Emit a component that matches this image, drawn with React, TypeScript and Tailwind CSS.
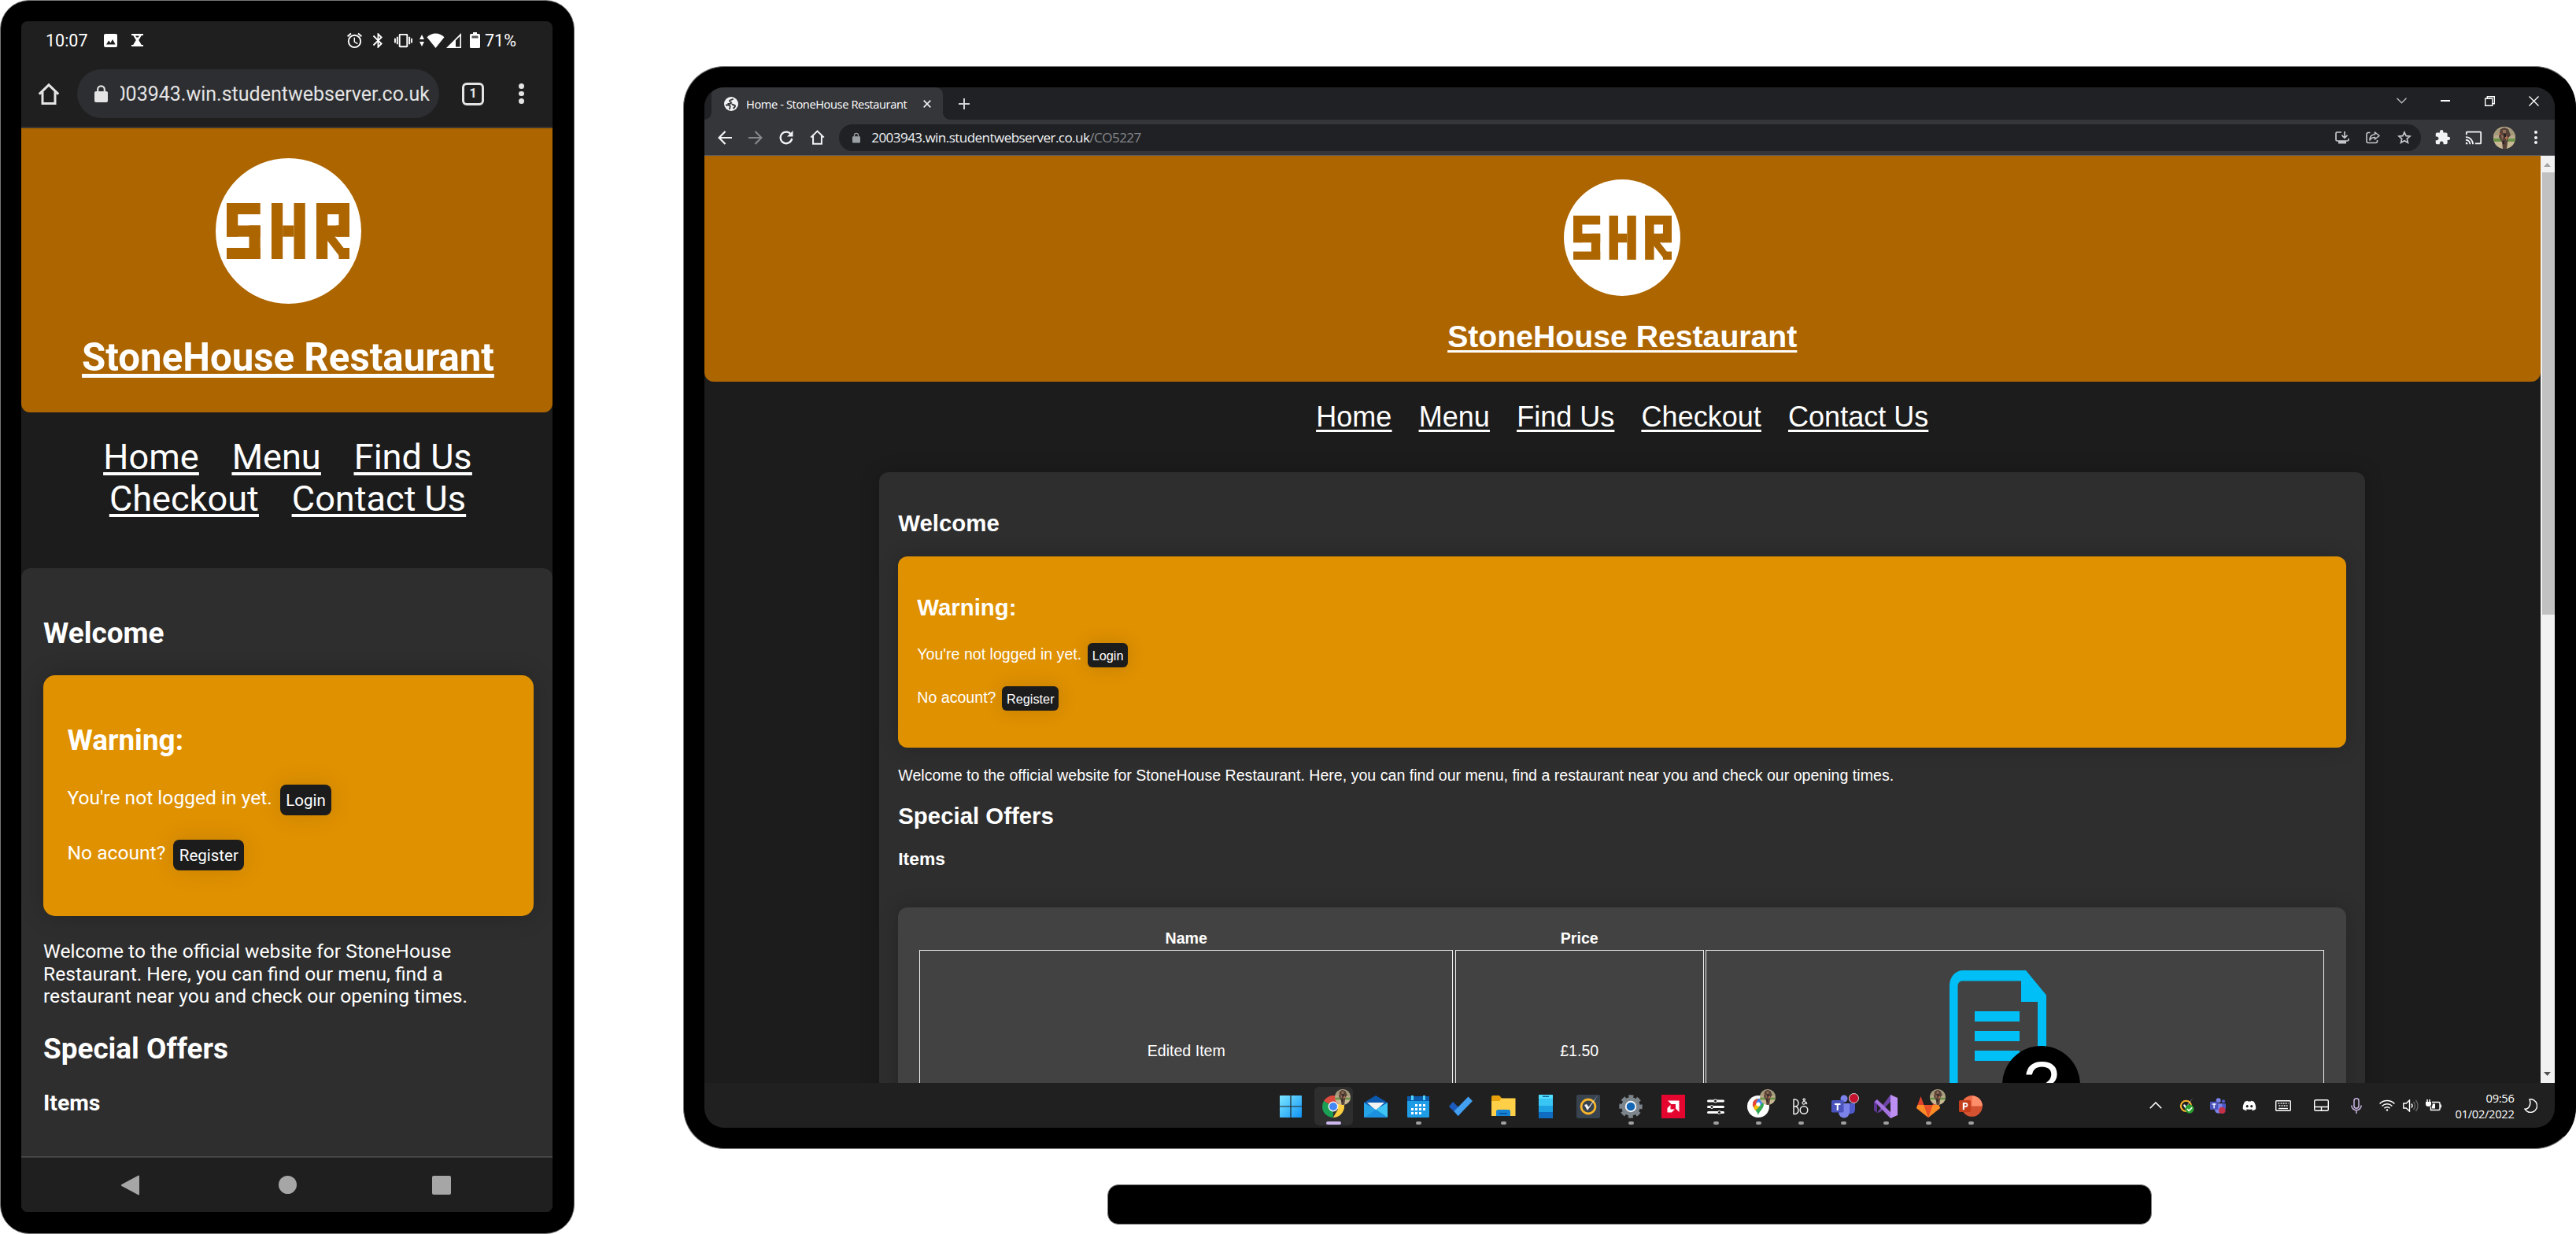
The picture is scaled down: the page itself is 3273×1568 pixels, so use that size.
import React from 'react';
import { FaDiscord } from 'react-icons/fa';
import { MdExtension, MdBluetooth, MdOutlineAlarm, MdVibration, MdCast } from 'react-icons/md';

type Kids = { children?: React.ReactNode };

/* ---------- Shared pieces ---------- */

function Logo({ className }: { className: string }) {
  return (
    <div className={`flex items-center justify-center rounded-full bg-white ${className}`}>
      <svg viewBox="0 0 11 5" className="w-[84.7%]" fill="#ad6500" stroke="#ad6500" strokeWidth="0">
        <rect x="0" y="0" width="3" height="1" />
        <rect x="0" y="0" width="1" height="3" />
        <rect x="0" y="2" width="3" height="1" />
        <rect x="2" y="2" width="1" height="3" />
        <rect x="0" y="4" width="3" height="1" />
        <rect x="4" y="0" width="1" height="5" />
        <rect x="6" y="0" width="1" height="5" />
        <rect x="5" y="2" width="1" height="1" />
        <rect x="8" y="0" width="1" height="5" />
        <rect x="8" y="0" width="3" height="1" />
        <rect x="10" y="0" width="1" height="3" />
        <rect x="9.8" y="2" width="1.2" height="1" />
        <rect x="10" y="4" width="1" height="1" />
        <line x1="9.1" y1="2.9" x2="10.5" y2="4.7" strokeWidth="0.75" />
        <rect x="8.9" y="2" width="1.2" height="1" />
      </svg>
    </div>
  );
}

function Avatar({ className }: { className: string }) {
  return (
    <svg viewBox="0 0 28 28" className={className}>
      <defs>
        <clipPath id="avatar-clip"><circle cx="14" cy="14" r="14" /></clipPath>
      </defs>
      <g clipPath="url(#avatar-clip)">
        <rect width="28" height="28" fill="#b9a98a" />
        <rect y="3" width="28" height="8" fill="#a39a7c" />
        <rect y="15" width="28" height="4" fill="#6c9448" />
        <rect y="19" width="28" height="9" fill="#c8b994" />
        <path d="M9 3l5-2 5 2 3 8-3 3-1 6-1 8h-5l-1-8-4-7 1-6z" fill="#564238" />
        <path d="M12 4h4v4h-4zM10 10l3 2-2 5zM16 11l3 3-3 4z" fill="#94705a" />
        <path d="M13 9h3v5h-2zM12 18h2v4h-2z" fill="#2a2222" />
        <path d="M15 13h3v2h-3zM7 8h2v2H7z" fill="#c86a48" />
      </g>
    </svg>
  );
}

function HomeIcon({ className }: { className: string }) {
  return (
    <svg viewBox="0 0 28 28" className={className} fill="none" stroke="currentColor" strokeWidth="3">
      <path d="M1.8 14.2L14 2.4l12.2 11.8M6 11v15h16V11" />
    </svg>
  );
}

function LockIcon({ className }: { className: string }) {
  return (
    <svg viewBox="0 0 17 22" className={className}>
      <rect x="0" y="8" width="17" height="14" rx="2" fill="currentColor" />
      <path d="M4.2 9V5.600a4.300 4.300 0 018.600 0V9" fill="none" stroke="currentColor" strokeWidth="2.200" />
    </svg>
  );
}

/* ---------- Phone ---------- */

function PhoneStatus() {
  return (
    <div className="flex h-[48px] shrink-0 items-center text-[21.5px] leading-[24px] text-white">
      <span className="ml-[31px] w-[74px] pt-[2px]">10:07</span>
      <svg viewBox="0 0 17 17" className="h-[17px] w-[17px]">
        <rect width="17" height="17" rx="2" fill="#fff" />
        <path d="M3 13.500l3.200-5 2.200 3 2.600-4.500 3.600 6.500z" fill="#1f1f1f" />
      </svg>
      <svg viewBox="0 0 15 16" className="ml-[18px] h-[16px] w-[15px]" fill="#fff">
        <path fillRule="evenodd" d="M0 0h15v2h-2.200L9.200 8l3.600 6H15v2H0v-2h2.200l3.600-6L2.200 2H0zM5 2.500l1.300 2h2.400l1.300-2z" />
      </svg>
      <MdOutlineAlarm className="ml-[257px] h-[23px] w-[23px]" />
      <MdBluetooth className="ml-[7px] h-[23px] w-[23px]" />
      <MdVibration className="ml-[9px] h-[23px] w-[23px]" />
      <svg viewBox="0 0 6 15" className="ml-[9px] h-[17px] w-[6px]" fill="#fff">
        <path d="M3 0l3 6H0zM3 15L0 9h6z" />
      </svg>
      <svg viewBox="0 0 22 19" className="ml-[3px] h-[19px] w-[23px]" fill="#fff">
        <path d="M11 19L0 5.200C3 2 7 .4 11 .4S19 2 22 5.200z" />
      </svg>
      <svg viewBox="0 0 19 19" className="ml-[2px] h-[19px] w-[19px]" fill="#fff">
        <path fillRule="evenodd" d="M19 0v19H0zM17.400 4L12 9.400v8h5.400z" />
      </svg>
      <svg viewBox="0 0 13 20" className="ml-[11px] h-[20px] w-[13px]">
        <rect x="4" y="0" width="5" height="3" fill="#fff" />
        <rect x="0" y="2" width="13" height="18" rx="1.500" fill="#fff" />
        <rect x="2.500" y="4.500" width="8" height="3" fill="#555" />
      </svg>
      <span className="ml-[6px] pt-[2px]">71%</span>
    </div>
  );
}

function PhoneToolbar() {
  return (
    <div className="flex h-[88px] shrink-0 items-center border-b-2 border-[#3b3630] pt-[2px] text-[#e4e4e4]">
      <HomeIcon className="ml-[21px] h-[29px] w-[28px]" />
      <div className="ml-[22px] flex h-[62px] w-[460px] items-center rounded-full bg-[#2d2e31] pl-[22px]">
        <LockIcon className="h-[22px] w-[17px]" />
        <div className="ml-[16px] flex w-[393px] justify-end overflow-hidden pt-[2px]">
          <span className="text-[25px] leading-[32px] whitespace-nowrap">2003943.win.studentwebserver.co.uk</span>
        </div>
      </div>
      <div className="ml-[29px] flex h-[29px] w-[28px] items-center justify-center rounded-[6px] border-[3px] border-[#e4e4e4] text-[16px] leading-none font-bold">
        1
      </div>
      <div className="ml-[44px] flex flex-col gap-[3px]">
        <i className="size-[6.5px] rounded-full bg-[#e4e4e4]" />
        <i className="size-[6.5px] rounded-full bg-[#e4e4e4]" />
        <i className="size-[6.5px] rounded-full bg-[#e4e4e4]" />
      </div>
    </div>
  );
}

function PhoneButton({ children }: Kids) {
  return (
    <span className="flex h-[39.5px] items-center rounded-[8px] bg-[#1c1c1c] px-[7.5px] text-[20.5px] leading-[24px] shadow-[0_0_30px_rgba(0,0,0,0.12)]">
      {children}
    </span>
  );
}

function Phone() {
  return (
    <div className="h-[1568px] w-[730px] shrink-0 rounded-[37px] border border-[#777] bg-black p-[26px] pr-[27px]">
      <div className="flex h-[1513px] w-[675px] flex-col overflow-hidden rounded-[8px] bg-[#1f1f1f] font-[Roboto,sans-serif] text-white">
        <PhoneStatus />
        <PhoneToolbar />
        <div className="flex min-h-0 flex-1 flex-col bg-[#1c1c1c]">
          <header className="flex h-[361px] shrink-0 flex-col items-center rounded-b-[11px] bg-[#ad6500] pt-[38px] pl-[3px]">
            <Logo className="size-[185px]" />
            <h1 className="mt-[40px] text-[49.2px] leading-[56px] font-bold whitespace-nowrap underline decoration-[4.5px] underline-offset-[4px]">
              StoneHouse Restaurant
            </h1>
          </header>
          <nav className="mt-[30px] flex flex-col items-center pl-[2px] text-[45.1px] leading-[53px] whitespace-nowrap">
            <div className="flex gap-[42px] underline decoration-[3.5px] underline-offset-[4px]">
              <a>Home</a><a>Menu</a><a>Find Us</a>
            </div>
            <div className="flex gap-[42px] underline decoration-[3.5px] underline-offset-[4px]">
              <a>Checkout</a><a>Contact Us</a>
            </div>
          </nav>
          <main className="mt-[62px] flex-1 rounded-t-[12px] bg-[#2e2e2e] pt-[62px] pr-[24.5px] pl-[28px]">
            <h2 className="text-[36.9px] leading-[42px] font-bold">Welcome</h2>
            <section className="mt-[32px] h-[306px] rounded-[15px] bg-[#e09100] pt-[62px] pl-[30.5px] shadow-[0_0_30px_rgba(0,0,0,0.2)]">
              <h2 className="text-[36.9px] leading-[42px] font-bold">Warning:</h2>
              <div className="mt-[35px] flex h-[39px] items-center text-[24.6px] leading-[28px]">
                <span className="mr-[10px] pb-[6px]">You're not logged in yet.</span>
                <PhoneButton>Login</PhoneButton>
              </div>
              <div className="mt-[31px] flex h-[39px] items-center text-[24.6px] leading-[28px]">
                <span className="mr-[10px] pb-[6px]">No acount?</span>
                <PhoneButton>Register</PhoneButton>
              </div>
            </section>
            <p className="mt-[31px] text-[24.6px] leading-[28.5px] whitespace-nowrap">
              Welcome to the official website for StoneHouse<br />
              Restaurant. Here, you can find our menu, find a<br />
              restaurant near you and check our opening times.
            </p>
            <h2 className="mt-[31px] text-[36.9px] leading-[42px] font-bold">Special Offers</h2>
            <h3 className="mt-[31px] text-[28.4px] leading-[34px] font-bold">Items</h3>
          </main>
        </div>
        <div className="flex h-[71px] shrink-0 items-center border-t-2 border-[#454545] bg-[#1f1f1f]">
          <svg viewBox="0 0 23 26" className="ml-[127px] h-[26px] w-[23px]" fill="#a6a6a6">
            <path d="M22 .5a1 1 0 011 1v23a1 1 0 01-1 1L.6 14a1.200 1.200 0 010-2z" />
          </svg>
          <i className="ml-[177px] size-[22.5px] rounded-full bg-[#a6a6a6]" />
          <i className="ml-[172.5px] size-[24px] rounded-[2px] bg-[#a6a6a6]" />
        </div>
      </div>
    </div>
  );
}

/* ---------- Laptop: browser chrome ---------- */

function TabStrip() {
  return (
    <div className="flex h-[41px] shrink-0 bg-[#202124] text-white">
      <svg viewBox="0 0 9 9" className="h-[9px] w-[9px] self-end" fill="#35363a"><path d="M9 0v9H0a9 9 0 009-9z" /></svg>
      <div className="flex h-[41px] w-[294px] items-center rounded-t-[9px] bg-[#35363a] pl-[16px]">
        <svg viewBox="0 0 18 18" className="size-[18px]">
          <circle cx="9" cy="9" r="9" fill="#f1f3f4" />
          <path d="M11.500 2.500c-1 1.800-4 1-4.500 2.500s3 1.500 2 3-3.500.8-4.500 1M2 10.500h3.500c2 0 2.500 1.500 2 3s-.5 1.500-.5 2.500M10 9c1 2 4.500 1 4 3s-2 2-2.500 3" fill="none" stroke="#35363a" strokeWidth="1.900" />
        </svg>
        <span className="ml-[10px] w-[225px] text-[14.7px] leading-[20px] tracking-[-0.42px] whitespace-nowrap">
          Home - StoneHouse Restaurant
        </span>
        <svg viewBox="0 0 10 10" className="size-[10px]" stroke="#e8eaed" strokeWidth="1.800"><path d="M.7.7l8.600 8.600M9.300.7L.7 9.300" /></svg>
      </div>
      <svg viewBox="0 0 9 9" className="h-[9px] w-[9px] self-end" fill="#35363a"><path d="M0 0v9h9a9 9 0 01-9-9z" /></svg>
      <svg viewBox="0 0 14 14" className="ml-[11px] size-[14px] self-center" stroke="#cfd1d4" strokeWidth="2"><path d="M7 0v14M0 7h14" /></svg>
      <div className="ml-auto flex h-[34px] items-center">
        <div className="flex w-[56px] justify-center">
          <svg viewBox="0 0 13 8" className="h-[8px] w-[13px]" fill="none" stroke="#b8babd" strokeWidth="1.400"><path d="M.5.7l6 6 6-6" /></svg>
        </div>
        <div className="flex w-[56.5px] justify-center">
          <i className="h-[1.5px] w-[12px] bg-white" />
        </div>
        <div className="flex w-[56.5px] justify-center">
          <svg viewBox="0 0 13 13" className="size-[13px]" fill="none" stroke="#fff" strokeWidth="1.400"><path d="M.7 3.300h9v9h-9zM3.300 3.300V.7h9v9H9.700" /></svg>
        </div>
        <div className="flex w-[54px] justify-center">
          <svg viewBox="0 0 13 13" className="size-[13px]" stroke="#fff" strokeWidth="1.400"><path d="M.5.5l12 12M12.500.5l-12 12" /></svg>
        </div>
      </div>
    </div>
  );
}

function Slot({ children }: Kids) {
  return <div className="flex w-[39.3px] items-center justify-center">{children}</div>;
}

function AddressBar() {
  return (
    <div className="flex h-[46px] shrink-0 items-center border-b border-[#5a5c60] bg-[#35363a] pl-[6px] text-[#f1f3f4]">
      <Slot>
        <svg viewBox="0 0 18 18" className="size-[18px]" fill="none" stroke="currentColor" strokeWidth="2.200"><path d="M18 9H2M9.500 1L1.600 9l7.900 8" /></svg>
      </Slot>
      <Slot>
        <svg viewBox="0 0 18 18" className="size-[18px]" fill="none" stroke="#85878a" strokeWidth="2.200"><path d="M0 9h16M8.500 1l7.900 8-7.900 8" /></svg>
      </Slot>
      <Slot>
        <svg viewBox="0 0 18 18" className="size-[18px]" fill="none" stroke="currentColor" strokeWidth="2.300"><path d="M14.800 4.500A7.300 7.300 0 1016.200 10" /><path d="M17.500 0v7.500H10z" fill="currentColor" stroke="none" /></svg>
      </Slot>
      <Slot><HomeIcon className="h-[19px] w-[19px]" /></Slot>
      <div className="ml-[8px] flex h-[34px] w-[2010px] items-center rounded-full bg-[#202124] pr-[2px] pl-[17px]">
        <LockIcon className="h-[14px] w-[10px] text-[#9aa0a6]" />
        <span className="ml-[14px] text-[17.1px] leading-[22px] tracking-[-0.58px] whitespace-nowrap">
          2003943.win.studentwebserver.co.uk<span className="text-[#85888c]">/CO5227</span>
        </span>
        <div className="ml-auto flex text-[#c4c7cb]">
          <Slot>
            <svg viewBox="0 0 18 16" className="h-[16px] w-[18px]" fill="none" stroke="currentColor" strokeWidth="1.700"><path d="M8 1H2.500A1.500 1.500 0 001 2.500v8A1.500 1.500 0 002.500 12h13a1.500 1.500 0 001.500-1.500V9M12 0v8M8.500 4.800L12 8.300l3.500-3.500" /><path d="M4 12h10v3.500H4z" fill="currentColor" stroke="none" /></svg>
          </Slot>
          <Slot>
            <svg viewBox="0 0 18 16" className="h-[16px] w-[18px]" fill="none" stroke="currentColor" strokeWidth="1.600"><path d="M5.500 1.500H3A2 2 0 001 3.500v9A2 2 0 003 14.500h9.500a2 2 0 002-2V11" /><path d="M11.500 1l5.500 4.500-5.500 4.500V7.500C8.500 7.500 6.500 8.500 5 11c0-4.500 2.500-7 6.500-7.300z" strokeLinejoin="round" /></svg>
          </Slot>
          <Slot>
            <svg viewBox="0 0 18 17" className="h-[17px] w-[18px]" fill="none" stroke="currentColor" strokeWidth="1.700"><path d="M9 2l2.100 4.600 5 .5-3.800 3.300 1.100 4.900L9 12.700l-4.400 2.600 1.100-4.900L1.900 7.100l5-.5z" /></svg>
          </Slot>
        </div>
      </div>
      <div className="ml-[8px] flex items-center">
        <Slot><MdExtension className="size-[21px]" /></Slot>
        <Slot><MdCast className="size-[22px]" /></Slot>
        <Slot><Avatar className="size-[28px]" /></Slot>
        <Slot>
          <div className="flex flex-col gap-[2.5px]">
            <i className="size-[4px] rounded-full bg-[#f1f3f4]" />
            <i className="size-[4px] rounded-full bg-[#f1f3f4]" />
            <i className="size-[4px] rounded-full bg-[#f1f3f4]" />
          </div>
        </Slot>
      </div>
    </div>
  );
}

function Scrollbar() {
  return (
    <div className="flex w-[18.5px] shrink-0 flex-col items-center bg-[#f1f1f1]">
      <svg viewBox="0 0 9 5" className="mt-[9px] h-[5px] w-[9px]" fill="#a3a3a3"><path d="M4.500 0L9 5H0z" /></svg>
      <i className="mt-[7px] ml-[2px] h-[562px] w-[16px] bg-[#c1c1c1]" />
      <svg viewBox="0 0 9 5" className="mt-auto mb-[9px] h-[5px] w-[9px]" fill="#505050"><path d="M4.500 5L9 0H0z" /></svg>
    </div>
  );
}

/* ---------- Laptop: site ---------- */

function DeskButton({ children }: Kids) {
  return (
    <span className="flex h-[31px] items-center rounded-[6px] bg-[#1c1c1c] px-[5.5px] pt-[1px] text-[16.3px] leading-[20px] shadow-[0_0_25px_rgba(0,0,0,0.14)]">
      {children}
    </span>
  );
}

function DocumentPicture() {
  return (
    <div className="relative mt-[25px] h-[143px] w-[123px]">
      <svg viewBox="0 0 123 143" className="h-[143px] w-[123px]" fill="#00bff7">
        <path fillRule="evenodd" d="M17 0h80l26 31.500V143H0V19A17 19 0 0117 0zM16 13.500a5.500 6 0 00-5.500 6V143H112V40H91V13.500z" />
        <rect x="32" y="52" width="57" height="13" />
        <rect x="32" y="77" width="57" height="13" />
        <rect x="32" y="102" width="57" height="13" />
      </svg>
      <div className="absolute top-[96px] left-[67px] flex h-[99px] w-[99px] justify-center rounded-full bg-black">
        <span className="text-[82px] leading-[98px]">?</span>
      </div>
    </div>
  );
}

function Site() {
  return (
    <div className="flex h-full min-w-0 flex-1 flex-col overflow-hidden bg-[#1c1c1c] font-['Liberation_Sans',Arial,sans-serif] text-white">
      <header className="flex h-[286.5px] shrink-0 flex-col items-center rounded-b-[12px] bg-[#ad6500] pt-[30px]">
        <Logo className="size-[148px]" />
        <h1 className="mt-[29px] text-[39.2px] leading-[45px] font-bold whitespace-nowrap underline decoration-[3px] underline-offset-[4px]">
          StoneHouse Restaurant
        </h1>
      </header>
      <nav className="mt-[24px] flex shrink-0 justify-center gap-[34.4px] text-[36px] leading-[42px] whitespace-nowrap underline decoration-[2.5px] underline-offset-[4px]">
        <a>Home</a><a>Menu</a><a>Find Us</a><a>Checkout</a><a>Contact Us</a>
      </nav>
      <main className="mt-[49px] h-[900px] w-[1888px] shrink-0 self-center rounded-[12px] bg-[#2e2e2e] px-[24px] pt-[48px] shadow-[0_0_25px_rgba(0,0,0,0.2)]">
        <h2 className="text-[29.4px] leading-[34px] font-bold">Welcome</h2>
        <section className="mt-[25.5px] h-[243px] rounded-[12px] bg-[#e09100] px-[24px] pt-[48px] shadow-[0_0_25px_rgba(0,0,0,0.2)]">
          <h2 className="text-[29.4px] leading-[34px] font-bold">Warning:</h2>
          <div className="mt-[28px] flex h-[31px] items-center text-[19.6px] leading-[22px]">
            <span className="mr-[8px] pb-[3px]">You're not logged in yet.</span>
            <DeskButton>Login</DeskButton>
          </div>
          <div className="mt-[24px] flex h-[31px] items-center text-[19.6px] leading-[22px]">
            <span className="mr-[8px] pb-[3px]">No acount?</span>
            <DeskButton>Register</DeskButton>
          </div>
        </section>
        <p className="mt-[23.5px] text-[19.6px] leading-[22px]">
          Welcome to the official website for StoneHouse Restaurant. Here, you can find our menu, find a restaurant near you and check our opening times.
        </p>
        <h2 className="mt-[24px] text-[29.4px] leading-[34px] font-bold">Special Offers</h2>
        <h3 className="mt-[24px] text-[22.9px] leading-[26px] font-bold">Items</h3>
        <div className="mt-[49px] h-[400px] rounded-[12px] bg-[#424242] px-[27px] pt-[28px] shadow-[0_0_25px_rgba(0,0,0,0.2)]">
          <div className="grid grid-cols-[678px_316px_786px] gap-x-[2.5px] gap-y-[4px] text-center text-[19.6px] leading-[22px]">
            <b>Name</b>
            <b>Price</b>
            <span />
            <div className="flex h-[256px] items-center justify-center border border-[#f0f0f0]">Edited Item</div>
            <div className="flex h-[256px] items-center justify-center border border-[#f0f0f0]">£1.50</div>
            <div className="flex h-[256px] items-start border border-[#f0f0f0] pl-[309px]">
              <DocumentPicture />
            </div>
          </div>
        </div>
      </main>
    </div>
  );
}

/* ---------- Laptop: taskbar ---------- */

function TaskApp({ children, mark }: Kids & { mark?: 'dot' | 'active' }) {
  return (
    <div className="flex w-[54px] justify-center pt-[5px]">
      <div className={`flex h-[49px] w-[49px] flex-col items-center gap-[4px] rounded-[6px] pt-[9px] ${mark === 'active' ? 'bg-[#2e2e2e]' : ''}`}>
        <div className="relative flex size-[31px] items-center justify-center">{children}</div>
        {mark === 'dot' && <i className="h-[4px] w-[7px] rounded-full bg-[#a0a0a0]" />}
        {mark === 'active' && <i className="h-[4px] w-[19px] rounded-full bg-[#cdb8ee]" />}
      </div>
    </div>
  );
}

function Badge() {
  return <Avatar className="absolute -top-[6px] -right-[6px] size-[20px]" />;
}

function NortonRing() {
  return (
    <g>
      <circle cx="15" cy="15" r="9" fill="none" stroke="#f9b52b" strokeWidth="2.800" />
      <path d="M10 13l4 7L27 1 15.500 15.500 13 12z" fill="#f3f3f3" />
    </g>
  );
}

function TeamsMark() {
  return (
    <g>
      <circle cx="16" cy="5" r="4.500" fill="#7b83eb" />
      <circle cx="25.500" cy="6.500" r="3.200" fill="#5059c9" />
      <path d="M20 11h10v8a5.500 5.500 0 01-10 3z" fill="#5059c9" />
      <path d="M9 11h14v11a7 7.500 0 01-14 0z" fill="#7b83eb" />
      <rect x="0" y="7" width="15.500" height="15.500" rx="1.500" fill="#4b53bc" />
      <rect x="4" y="11" width="7.500" height="2" fill="#fff" />
      <rect x="6.700" y="11" width="2.100" height="9" fill="#fff" />
    </g>
  );
}

function TaskbarApps() {
  return (
    <div className="flex">
      <TaskApp>
        <svg viewBox="0 0 28 28" className="size-[28px]">
          <defs><linearGradient id="win" x1="0" y1="0" x2="1" y2="1"><stop offset="0" stopColor="#7de8ff" /><stop offset="1" stopColor="#0f93f5" /></linearGradient></defs>
          <path d="M0 1a1 1 0 011-1h12.400v13.400H0zM14.600 0H27a1 1 0 011 1v12.400H14.600zM0 14.600h13.400V28H1a1 1 0 01-1-1zM14.600 14.600H28V27a1 1 0 01-1 1H14.600z" fill="url(#win)" />
        </svg>
      </TaskApp>
      <TaskApp mark="active">
        <svg viewBox="0 0 28 28" className="size-[28px]">
          <path d="M14 14L1.900 7A14 14 0 0126.100 7z" fill="#dd4b3e" />
          <path d="M14 14l-.2 14A14 14 0 011.900 7z" fill="#1a9f55" />
          <path d="M14 14l12.100-7A14 14 0 0113.800 28l6.300-10.500z" fill="#ffcd40" />
          <circle cx="14" cy="14" r="6.500" fill="#f4f4f4" />
          <circle cx="14" cy="14" r="5" fill="#4587f4" />
        </svg>
        <Badge />
      </TaskApp>
      <TaskApp>
        <svg viewBox="0 0 30 28" className="h-[28px] w-[30px]">
          <path d="M0 9L15 0l15 9v8H0z" fill="#0c58ad" />
          <path d="M4 9h22l-11 10z" fill="#f3f3f3" />
          <path d="M0 9l15 9 15 10H1a1 1 0 01-1-1z" fill="#27a3e8" />
          <path d="M30 9L15 18l15 10z" fill="#3ec4f5" />
          <path d="M15 18l15 10H1z" fill="#1b91df" />
        </svg>
      </TaskApp>
      <TaskApp mark="dot">
        <svg viewBox="0 0 28 28" className="size-[28px]">
          <rect y="1" width="28" height="27" rx="1.500" fill="#1f9ce6" />
          <path d="M0 2.500A1.500 1.500 0 011.500 1h25A1.500 1.500 0 0128 2.500V7H0z" fill="#0b5caf" />
          <rect x="5" y="0" width="3" height="6" fill="#50d5ff" /><rect x="20" y="0" width="3" height="6" fill="#50d5ff" />
          <g fill="#fff">
            <rect x="10" y="11" width="3" height="3" /><rect x="15" y="11" width="3" height="3" /><rect x="20" y="11" width="3" height="3" />
            <rect x="5" y="16" width="3" height="3" /><rect x="10" y="16" width="3" height="3" /><rect x="15" y="16" width="3" height="3" /><rect x="20" y="16" width="3" height="3" />
            <rect x="5" y="21" width="3" height="3" /><rect x="10" y="21" width="3" height="3" /><rect x="15" y="21" width="3" height="3" />
          </g>
        </svg>
      </TaskApp>
      <TaskApp>
        <svg viewBox="0 0 30 26" className="h-[26px] w-[30px]">
          <path d="M0 13l5-6 12 12-5 6z" fill="#1b5bbd" />
          <path d="M6.500 19L24.500.5l5.500 5.500-18.500 19z" fill="#43a0f0" />
        </svg>
      </TaskApp>
      <TaskApp mark="dot">
        <svg viewBox="0 0 31 27" className="h-[27px] w-[31px]">
          <path d="M0 2a2 2 0 012-2h8l3.500 4H24v8H0z" fill="#e8a10c" />
          <path d="M0 7h10l3-3.500h17.500V26H0z" fill="#ffcf48" />
          <path d="M6 26v-5.500A2.500 2.500 0 018.500 18h13a2.500 2.500 0 012.500 2.500V26z" fill="#1583d6" />
          <rect x="10" y="22" width="10" height="2" fill="#0b5ba5" />
        </svg>
      </TaskApp>
      <TaskApp>
        <svg viewBox="0 0 18 30" className="h-[30px] w-[18px]">
          <rect width="18" height="30" rx="1" fill="#3ac6f4" />
          <rect width="18" height="5" rx="1" fill="#50e0ff" /><rect x="5" y="1.500" width="8" height="1.500" fill="#14679f" />
          <rect y="14" width="18" height="8" fill="#1ea2e4" />
          <path d="M0 22h18v7a1 1 0 01-1 1H1a1 1 0 01-1-1z" fill="#0f6cc0" />
        </svg>
      </TaskApp>
      <TaskApp>
        <svg viewBox="0 0 30 30" className="size-[30px]"><rect width="30" height="30" rx="2" fill="#38434f" /><NortonRing /></svg>
      </TaskApp>
      <TaskApp mark="dot">
        <svg viewBox="0 0 30 30" className="size-[30px]">
          <circle cx="15" cy="15" r="12.700" fill="none" stroke="#7d858c" strokeWidth="4" strokeDasharray="6 3.975" strokeDashoffset="3" />
          <circle cx="15" cy="15" r="11.800" fill="#7d858c" />
          <circle cx="15" cy="15" r="7.200" fill="#f4f4f4" />
          <circle cx="15" cy="15" r="5.300" fill="#1266b5" />
        </svg>
      </TaskApp>
      <TaskApp>
        <svg viewBox="0 0 30 30" className="size-[30px]">
          <rect width="30" height="30" fill="#e4062f" />
          <path d="M8 7.500h14.500V22L18 17.500V12h-5.500z" fill="#fff" />
          <path d="M11.500 13v5.500H17L13 22.500H7.500V17z" fill="#fff" />
        </svg>
      </TaskApp>
      <TaskApp mark="dot">
        <svg viewBox="0 0 22 20" className="h-[20px] w-[22px]" fill="#202020" stroke="#fff">
          <path d="M1.500 3h19M1.500 10.500h19M1.500 17.500h19" strokeWidth="3" strokeLinecap="round" />
          <g strokeWidth="1"><circle cx="10.500" cy="3" r="2" /><circle cx="6" cy="10.500" r="2" /><circle cx="15.500" cy="17.500" r="2" /></g>
        </svg>
      </TaskApp>
      <TaskApp mark="dot">
        <svg viewBox="0 0 28 28" className="size-[28px]">
          <circle cx="14" cy="14" r="14" fill="#fff" />
          <path d="M14 25c-1-5-7-8-7-14a7 7 0 0114 0c0 6-6 9-7 14z" fill="#34a853" />
          <path d="M8 15l9-10a7 7 0 00-9.600 3.500A7 7 0 008 15z" fill="#ea4335" />
          <path d="M8 15l5-6 4 4-6.500 6A14 14 0 018 15z" fill="#fbbc04" />
          <path d="M14 4a7 7 0 016.500 4.500l-5 5.500L11 9z" fill="#4285f4" />
          <circle cx="14" cy="11" r="2.600" fill="#fff" />
        </svg>
        <Badge />
      </TaskApp>
      <TaskApp mark="dot">
        <svg viewBox="0 0 22 22" className="size-[22px]" fill="none" stroke="#eee" strokeWidth="1.500">
          <path d="M2 1.500v19h2.500a5 5 0 000-9.500H2h1.500a4.500 4.500 0 000-9H2" />
          <circle cx="15" cy="15.500" r="4.800" />
          <path d="M19 8l-5-5.500c-.5-1.500 2.500-2 2.500-.3S12 5 13 7s4 1 5.500-2" strokeWidth="1.200" />
        </svg>
      </TaskApp>
      <TaskApp mark="dot">
        <svg viewBox="0 0 30 30" className="size-[30px]"><TeamsMark /></svg>
        <i className="absolute -top-[1px] -right-[4px] size-[12.5px] rounded-full border border-[#ddd] bg-[#c4122f]" />
      </TaskApp>
      <TaskApp mark="dot">
        <svg viewBox="0 0 30 30" className="size-[30px]">
          <path d="M0 9l4-3v17l-4-3z" fill="#5d3596" />
          <path d="M4 23L21 0v9L8 22z" fill="#6f44a8" />
          <path d="M21 0l9 4v22l-9 4z" fill="#bd8ff0" />
          <path d="M4 6l17 16v8L1 9z" fill="#a674e0" />
        </svg>
      </TaskApp>
      <TaskApp mark="dot">
        <svg viewBox="0 0 30 28" className="h-[28px] w-[30px]">
          <path d="M15 28L0 16 5.500 1 9.500 12h11L24.500 1 30 16z" fill="#e2432a" />
          <path d="M15 28L0 16l1.500-4h8zM15 28l15-12-1.500-4h-8z" fill="#fc8d26" />
          <path d="M15 28L9.500 12h11z" fill="#e8502a" />
        </svg>
        <Badge />
      </TaskApp>
      <TaskApp mark="dot">
        <svg viewBox="0 0 30 27" className="h-[27px] w-[30px]">
          <circle cx="16.500" cy="13.500" r="13.300" fill="#d35230" />
          <path d="M16.500.2a13.300 13.300 0 00-13.300 13.300h13.300z" fill="#ed6c47" />
          <path d="M16.500.2a13.300 13.300 0 0113.300 13.300H16.500z" fill="#ff8f6b" />
          <rect x="0" y="6" width="15" height="15" rx="1.500" fill="#c43e1c" />
          <rect x="4.800" y="9" width="2.100" height="9.200" fill="#fff" />
          <circle cx="8.300" cy="12" r="2.200" fill="none" stroke="#fff" strokeWidth="1.700" />
        </svg>
      </TaskApp>
    </div>
  );
}

function Tray() {
  return (
    <div className="ml-auto flex items-center pr-[10.5px] text-white">
      <div className="flex w-[40px] justify-center">
        <svg viewBox="0 0 16 9" className="h-[9px] w-[16px]" fill="none" stroke="#fff" strokeWidth="1.600"><path d="M.8 8.200L8 1l7.200 7.200" /></svg>
      </div>
      <div className="flex w-[39px] justify-center">
        <svg viewBox="4 1 26 27" className="size-[20px]"><NortonRing /><circle cx="21" cy="20" r="7.500" fill="#2ba12f" /><path d="M17 20l3 3 5.500-5.500" fill="none" stroke="#fff" strokeWidth="2.200" /></svg>
      </div>
      <div className="flex w-[40px] justify-center">
        <svg viewBox="0 0 30 30" className="size-[20px]"><TeamsMark /><circle cx="23" cy="24" r="6.500" fill="#c4314b" /></svg>
      </div>
      <div className="flex w-[39px] justify-center"><FaDiscord className="size-[18px]" /></div>
      <div className="flex w-[48px] justify-center">
        <svg viewBox="0 0 20 14" className="h-[14px] w-[20px]" fill="none" stroke="#fff" strokeWidth="1.400">
          <rect x=".7" y=".7" width="18.600" height="12.600" rx="1" />
          <path d="M3.500 4h13M4.500 7h11" strokeDasharray="1.800 1.300" /><path d="M4 10.500h12" />
        </svg>
      </div>
      <div className="flex w-[49px] justify-center">
        <svg viewBox="0 0 19 15" className="h-[15px] w-[19px]" fill="none" stroke="#fff" strokeWidth="1.400"><rect x=".7" y=".7" width="17.600" height="13.600" rx="1.500" /><path d="M1 9.500h17M9.500 9.500V14" /></svg>
      </div>
      <div className="flex w-[40px] justify-center">
        <svg viewBox="0 0 14 20" className="h-[20px] w-[14px]" fill="none" stroke="#c9b5e0" strokeWidth="1.500"><rect x="4" y=".8" width="6" height="12.500" rx="3" /><path d="M.8 9.500a6.200 6.200 0 0012.400 0M7 16v4" /></svg>
      </div>
      <div className="flex w-[38px] justify-center">
        <svg viewBox="0 0 20 15" className="h-[15px] w-[20px]" fill="none" stroke="#fff" strokeWidth="1.500"><path d="M.6 5.500a13.300 13.300 0 0118.800 0M3.600 8.500a9 9 0 0112.800 0M6.400 11.300a5 5 0 017.200 0" /><circle cx="10" cy="13.500" r="1.200" fill="#fff" stroke="none" /></svg>
      </div>
      <div className="flex w-[22px] justify-center">
        <svg viewBox="0 0 21 16" className="h-[16px] w-[21px]" fill="none" stroke="#fff" strokeWidth="1.400"><path d="M.8 5v6h3.400L8.500 15V1L4.200 5z" /><path d="M11 5.500a4 4 0 010 5" /><path d="M13.500 3a7.500 7.500 0 010 10M16.500 1a11 11 0 010 14" stroke="#666" /></svg>
      </div>
      <div className="flex w-[36px] justify-center">
        <svg viewBox="0 0 20 16" className="h-[16px] w-[20px]" fill="none" stroke="#fff" strokeWidth="1.500"><path d="M8 3.500h8.500a1.500 1.500 0 011.500 1.500v7a1.500 1.500 0 01-1.500 1.500H6.500V9" /><path d="M0 3h7v3a3.500 3 0 01-7 0zM1.300 0h1.500v3H1.300zM4.300 0h1.500v3H4.300zM9 5.500h3v6H8V9zM18.500 6.500H20v4h-1.500z" fill="#fff" stroke="none" /></svg>
      </div>
      <div className="w-[84.5px] text-right text-[14.7px] leading-[20px] tracking-[-0.3px]">
        <div>09:56</div>
        <div>01/02/2022</div>
      </div>
      <div className="flex w-[41px] justify-center">
        <svg viewBox="0 0 17 18" className="h-[18px] w-[17px]" fill="none" stroke="#fff" strokeWidth="1.500"><path d="M7 .9a8.300 8.300 0 11-6 12.300C6 13.500 9.500 7.500 7 .9z" /></svg>
      </div>
    </div>
  );
}

function Laptop() {
  return (
    <div className="flex flex-col">
      <div className="mt-[84px] h-[1376px] w-[2405px] rounded-[52px] border border-[#777] border-r-black bg-black p-[26px]">
        <div className="flex h-[1322px] w-[2351px] flex-col overflow-hidden rounded-[25px] bg-[#202020] font-['Open_Sans',sans-serif]">
          <TabStrip />
          <AddressBar />
          <div className="flex h-[1178px] shrink-0">
            <Site />
            <Scrollbar />
          </div>
          <div className="flex min-h-0 flex-1 pl-[718px]">
            <TaskbarApps />
            <Tray />
          </div>
        </div>
      </div>
      <div className="mt-[45px] ml-[539px] h-[51px] w-[1327px] rounded-[14px] border border-[#777] bg-black" />
    </div>
  );
}

export default function App() {
  return (
    <div className="flex h-[1568px] w-[3273px] gap-[138px] overflow-hidden bg-white">
      <Phone />
      <Laptop />
    </div>
  );
}
